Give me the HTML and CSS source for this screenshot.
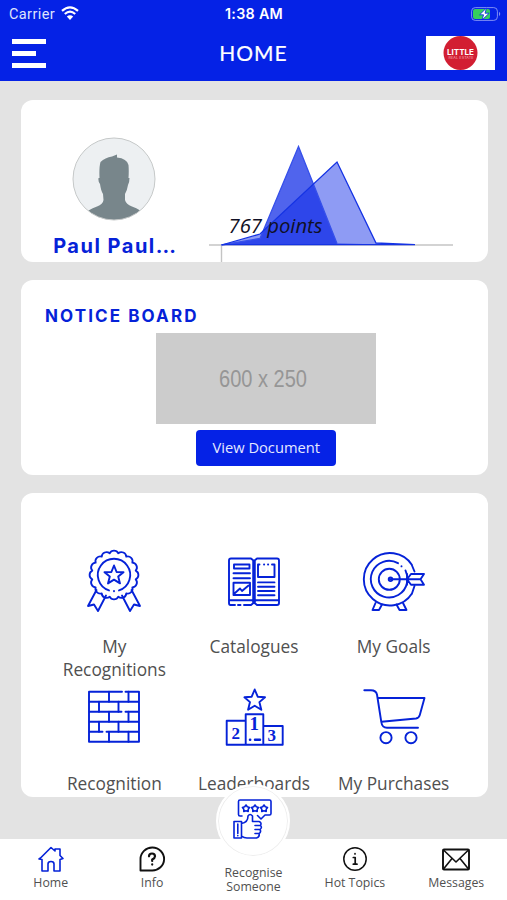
FILE: index.html
```html
<!DOCTYPE html>
<html lang="en">
<head>
    <meta charset="utf-8">
    <meta name="viewport" content="width=device-width, initial-scale=1.0">
    <title>Home</title>
    <link rel="stylesheet" href="styles.css">
</head>
<body>
    <header class="header">
        <div class="status">
            <div class="carrier">
                <span>Carrier</span>
                <svg class="wifi" viewBox="0 0 18 14">
                    <path d="M1 4.8Q9-2.2 17 4.8M3.8 8Q9 3.4 14.2 8" fill="none" stroke="#fff" stroke-width="2.2"/>
                    <path d="M9 14 5.8 10.6Q9 7.8 12.2 10.6Z" fill="#fff"/>
                </svg>
            </div>
            <div class="time">1:38 AM</div>
            <svg class="battery" viewBox="0 0 30 14">
                <rect x=".6" y=".6" width="25.8" height="12.8" rx="3.6" fill="none" stroke="#7f8ef4" stroke-width="1"/>
                <rect x="2" y="2" width="17" height="10" rx="2" fill="#35cf5e"/>
                <path d="M28 4.8Q30.5 7 28 9.2Z" fill="#7f8ef4"/>
                <path d="M15.5 1 8.6 7.8H12.6L11 13 18.2 6.2H14Z" fill="#fff" stroke="#0522e6" stroke-width=".8"/>
            </svg>
        </div>
        <div class="navbar">
            <div class="menu"><i></i><i class="short"></i><i></i></div>
            <h1>HOME</h1>
            <div class="brand">
                <svg viewBox="0 0 69 34">
                    <circle cx="34.5" cy="17" r="17" fill="#d21e32"/>
                    <text x="21" y="18.6" class="brand-name" textLength="27" lengthAdjust="spacingAndGlyphs">LITTLE</text>
                    <text x="22.5" y="23.2" class="brand-sub" textLength="25">REAL ESTATE</text>
                </svg>
            </div>
        </div>
    </header>

    <main class="content">
        <section class="card profile">
            <div class="user">
                <svg class="avatar" viewBox="0 0 84 84">
                    <defs><clipPath id="face"><circle cx="42" cy="42" r="41"/></clipPath></defs>
                    <circle cx="42" cy="42" r="41" fill="#edf0f2"/>
                    <path clip-path="url(#face)" fill="#78868b" d="M10 78Q16 73 25 69.500Q31 67 31.500 63L31 57Q29 54 28 47Q26 45 26.500 41H27.500Q27 30 28.500 25Q33 20.500 40 19.500L45 17.500 45 20.500Q55 21.500 56.500 28Q57 34 56.500 41H57.500Q57.500 45 56 48Q55 54 53 57V63Q54 67 60 69.500Q69 73 74 78V84H10Z"/>
                    <circle cx="42" cy="42" r="41" fill="none" stroke="#c5c8c8"/>
                </svg>
                <div class="user-name">Paul Paul<span>...</span></div>
            </div>
            <svg class="chart" viewBox="0 0 278 162">
                <path d="M0 145H244" stroke="#c4c4c4" stroke-width="1.400"/>
                <path d="M12.500 145V162" stroke="#c4c4c4" stroke-width="1.400"/>
                <path d="M12.500 145 51 134 128 62 167 143 206 145Z" fill="#0522e6" fill-opacity=".45"/>
                <path d="M12.500 145 51 138.500 89.500 46.500 128 143.500 206 145Z" fill="#0522e6" fill-opacity=".7"/>
                <path d="M12.500 145 51 138.500 89.500 46.500 128 143.500" class="line light"/>
                <path d="M12.500 145 51 134 128 62 167 143 206 144.600H12.500" class="line"/>
                <text x="19.500" y="133" textLength="94" lengthAdjust="spacingAndGlyphs">767 points</text>
            </svg>
        </section>

        <section class="card notice">
            <h2>NOTICE BOARD</h2>
            <svg class="picture" viewBox="0 0 220 91">
                <rect width="220" height="91" fill="#ccc"/>
                <text x="63" y="54" textLength="88" lengthAdjust="spacingAndGlyphs">600 x 250</text>
            </svg>
            <button class="btn">View Document</button>
        </section>

        <section class="card grid">
            <div class="item">
                <svg viewBox="0 0 64 64">
                    <g transform="translate(32 26)">
                        <path d="M22.600-4.500A5 5 0 0 1 22.600 4.500 5 5 0 0 1 19.100 12.800 5 5 0 0 1 12.800 19.100 5 5 0 0 1 4.500 22.600 5 5 0 0 1-4.500 22.600 5 5 0 0 1-12.800 19.100 5 5 0 0 1-19.100 12.800 5 5 0 0 1-22.600 4.500 5 5 0 0 1-22.600-4.500 5 5 0 0 1-19.100-12.800 5 5 0 0 1-12.800-19.100 5 5 0 0 1-4.500-22.600 5 5 0 0 1 4.500-22.600 5 5 0 0 1 12.800-19.100 5 5 0 0 1 19.100-12.800 5 5 0 0 1 22.600-4.500Z" transform="scale(.96)"/>
                        <path d="M-5 15.400A16.200 16.200 0 1 1 5 15.400M0 16V16.200"/>
                        <path d="M0-9.500 2.600-3 9.500-2.800 4.200 1.600 6 8.400 0 4.600-6 8.400-4.200 1.600-9.500-2.800-2.600-3Z"/>
                    </g>
                    <path d="M14.500 41 6 57 12 55.500 16 62 24 46.500M49.500 41 58 57 52 55.500 48 62 40 46.500"/>
                </svg>
                <span>My Recognitions</span>
            </div>
            <div class="item">
                <svg viewBox="0 0 64 64">
                    <path d="M13 56H8.500Q7 56 7 54V11.500Q7 9.500 9 9.500H29L32 12 35 9.500H55Q57 9.500 57 11.500V54Q57 56 55 56H35L32 53.500 29 56H22M16 56H18.500M31.200 12V54M32.800 12V54M7 51.300H30L32 53 34 51.300H57"/>
                    <path d="M12 15.500H27.500V19.500H12ZM11.500 24.300H28M11.500 29.300H28M11.500 33.700H28V46H11.500ZM13 44 18 39.500 20 42 26.500 36.500"/>
                    <path d="M37.500 15.500H36V28H52.500V15.500H50M42 15.500H42.200M46 15.500H46.200M36 33.400H52.500M36 37.700H52.500M36 42H52.500M36 46.300H52.500"/>
                </svg>
                <span>Catalogues</span>
            </div>
            <div class="item">
                <svg viewBox="0 0 64 64">
                    <path d="M50 16A26.200 26.200 0 1 0 50 44.500M36 14.200A18.300 18.300 0 1 0 45 34M43.500 21.500 45 26M39.500 17.200V17.400M49.800 16 52.500 22.500M49.800 45 52.500 37"/>
                    <circle cx="27.300" cy="30.300" r="10.500"/>
                    <circle cx="28.500" cy="30.300" r="1.800"/>
                    <path d="M28 30.300H58M45 30.300 49 25H62L58.500 30.300 62 35.700H49ZM45 25V35.700M13.500 54 10.500 61H17L20 55.500M41 54 44.500 61H37.500L34.500 55.500"/>
                </svg>
                <span>My Goals</span>
            </div>
            <div class="item">
                <svg viewBox="0 0 64 64">
                    <path d="M40 5.700H7V55.700H57V5.700H43.500M7 15.700H57M7 25.700H39.500M43.500 25.700H57M7 35.700H57M7 45.700H20.500M24.500 45.700H57"/>
                    <path d="M27 5.700V15.700M46.500 5.700V15.700M17 15.700V25.700M36.500 15.700V25.700M27 25.700V35.700M46.500 25.700V35.700M17 35.700V45.700M36.500 35.700V45.700M27 45.700V55.700M46.500 45.700V55.700"/>
                </svg>
                <span>Recognition</span>
            </div>
            <div class="item">
                <svg viewBox="0 0 64 64">
                    <path d="M32.700 3.500 35.700 10.700 43 11.300 37.400 16.100 39.300 23.800 32.700 19.700 26.100 23.800 28 16.100 22.400 11.300 29.700 10.700Z"/>
                    <path d="M23.700 58.700H4.700V34.700H23.700M41.300 40H60.700V58.700H41.300M23.700 28.300H41.300V58.700H23.700Z"/>
                    <path d="M28 53.800H28.200M33 53.800H38" stroke-width="2.500"/>
                    <text x="9.500" y="53">2</text>
                    <text x="27.500" y="43.500" class="first">1</text>
                    <text x="45.500" y="55">3</text>
                </svg>
                <span>Leaderboards</span>
            </div>
            <div class="item">
                <svg viewBox="0 0 64 64">
                    <path d="M2.300 4.200H9Q14 4.200 15 8.500L19.300 36Q20 41.700 25 41.700H56M15.700 12H62.500L57.800 29Q57 32 54 32.500L19.500 35.700"/>
                    <circle cx="24" cy="51.700" r="5.600"/>
                    <circle cx="49" cy="51.700" r="5.600"/>
                </svg>
                <span>My Purchases</span>
            </div>
        </section>
    </main>

    <nav class="tabs">
        <a class="tab">
            <svg class="blue" viewBox="0 0 28 28">
                <path d="M3.500 13 14 2.500 18 6V4H23V10.500L26 13.500 23 14.500V26H17V19Q17 16.500 14 16.500T11 19V26H5V14.500L2 14Z"/>
            </svg>
            <span>Home</span>
        </a>
        <a class="tab">
            <svg viewBox="0 0 28 28">
                <path d="M2.500 25.500V14A11.800 11.500 0 1 1 14 25.500Z"/>
                <path d="M11 11.300Q11 8.500 14 8.500T17 11.200Q17 13 14.200 14.500V16M14.200 19.300V19.600" stroke-width="2.200"/>
            </svg>
            <span>Info</span>
        </a>
        <a class="tab middle">
            <div class="bubble">
                <svg class="blue" viewBox="0 0 40 40">
                    <path d="M9 16H7Q5.500 16 5.500 14.500V1.500Q5.500 0 7 0H36.500Q38 0 38 1.500V13.500Q38 15 36.500 15H32L28 19 24.500 15.500"/>
                    <path d="M13 5 14.300 6.800 16.500 7.500 15.200 9.300 15.200 11.500 13 10.800 10.800 11.500 10.800 9.300 9.500 7.500 11.700 6.800ZM22 5 23.300 6.800 25.500 7.500 24.200 9.300 24.200 11.500 22 10.800 19.800 11.500 19.800 9.300 18.500 7.500 20.700 6.800ZM31 5 32.300 6.800 34.500 7.500 33.200 9.300 33.200 11.500 31 10.800 28.800 11.500 28.800 9.300 27.500 7.500 29.700 6.800Z"/>
                    <path d="M1 21.500H8.500V38H1ZM4.800 24V33.500M4.800 35.500V35.700M8.500 23.500Q15 22.500 15 16 17 13 19.500 16V21.500H26Q29 22.500 27.500 25.500 29.500 27.500 27 29.500 28.500 32 26 33.500 27 37 23.500 38H14Q11 38 8.500 36M22 25.500H27.500M22 29.500H27M22 33.500H26"/>
                </svg>
            </div>
            <span>Recognise Someone</span>
        </a>
        <a class="tab">
            <svg viewBox="0 0 28 28">
                <circle cx="14" cy="14" r="11.200" stroke-width="1.500"/>
                <path d="M12.300 12.500H14.200V19M12.300 19.200H16M14 8.700V8.900" stroke-width="1.700"/>
            </svg>
            <span>Hot Topics</span>
        </a>
        <a class="tab">
            <svg class="wide" viewBox="0 0 30 28">
                <rect x="2" y="4.500" width="26" height="20" rx="1"/>
                <path d="M2.500 5 15 17 27.500 5M2.500 24 11 13.500M27.500 24 19 13.500" stroke-width="1.600"/>
            </svg>
            <span>Messages</span>
        </a>
    </nav>
</body>
</html>
```
FILE: styles.css
```css
* {box-sizing: border-box;}
body {margin: 0;height: 900px;display: flex;flex-direction: column;overflow: hidden;background: #e3e3e3;color: #505050;font-family: "Open Sans", "Noto Sans", sans-serif;}
h1, h2 {margin: 0;}
svg {display: block;flex: none;}

/* header */
.header {height: 81px;flex: none;background: #0522e6;color: #fff;}
.status {height: 28px;padding: 0 6px 0 9px;display: grid;grid-template-columns: 1fr auto 1fr;align-items: center;}
.carrier {display: flex;align-items: center;gap: 6px;color: #dfe3fc;font-family: Roboto, sans-serif;font-size: 14.5px;letter-spacing: .4px;}
.wifi {width: 18px;height: 14px;margin-top: -2px;}
.time {margin-right: 2px;font: 600 14.3px/26px Inter, sans-serif;letter-spacing: .3px;}
.battery {width: 30px;height: 14px;justify-self: end;margin-top: -1px;}
.navbar {height: 50px;padding: 0 12px;display: grid;grid-template-columns: 1fr auto 1fr;align-items: center;}
.menu {width: 34px;display: flex;flex-direction: column;gap: 7px;}
.menu i {height: 5px;background: #fff;}
.menu .short {width: 24px;}
.navbar h1 {padding-bottom: 2px;font-family: Lato, sans-serif;font-size: 21px;font-weight: 400;letter-spacing: 1px;-webkit-text-stroke: .2px #fff;}
.brand {width: 69px;height: 34px;background: #fff;justify-self: end;}
.brand-name {font: bold 8px Inter, sans-serif;fill: #fff;}
.brand-sub {font: 3.8px Inter, sans-serif;fill: #f3a9b2;}

/* cards */
.content {flex: 1;min-height: 0;padding: 19px 19.5px 0 20.5px;display: flex;flex-direction: column;gap: 18px;}
.card {background: #fff;border-radius: 12px;overflow: hidden;flex: none;}
.profile {height: 162px;display: flex;}
.user {width: 188px;padding-top: 37px;display: flex;flex-direction: column;align-items: center;}
.avatar {width: 84px;height: 84px;margin-right: 1px;}
.user-name {margin-top: 10px;color: #0522d8;font: bold 20px/30px Inter, sans-serif;letter-spacing: 1.5px;}
.user-name span {letter-spacing: 0;}
.chart {width: 278px;height: 162px;}
.chart .line {fill: none;stroke: #1533e4;stroke-width: 1.3;}
.chart .light {stroke: #3650ea;}
.chart text {font: italic 20px "Open Sans", sans-serif;fill: #101025;}
.notice {height: 195px;padding: 24px 0 0 24.5px;display: flex;flex-direction: column;align-items: center;}
.notice h2 {align-self: flex-start;color: #0522d8;font: bold 17px/24px Inter, sans-serif;letter-spacing: 2.1px;}
.picture {width: 220px;height: 91px;margin: 5px 0 6px;}
.picture text {font: 24px "Liberation Sans", sans-serif;fill: #969696;}
.btn {width: 140px;height: 36px;padding: 0 0 2px;border: 0;border-radius: 4px;background: #0522e6;color: #e4e8ff;font: 14.7px "Open Sans", sans-serif;}

/* menu items */
.grid {height: 304px;padding: 56px 24px 0;display: grid;grid-template-columns: repeat(3, 1fr);grid-auto-rows: 137px;}
.item {padding: 0 11px;display: flex;flex-direction: column;align-items: center;text-align: center;font-size: 17.3px;line-height: 23px;}
.item svg {width: 64px;height: 64px;margin-bottom: 22px;fill: none;stroke: #0522d8;stroke-width: 1.9;stroke-linecap: round;stroke-linejoin: round;}
.item text {font: bold 17px "Liberation Serif", serif;fill: #0522d8;stroke: none;}
.item .first {font-size: 19px;}

/* bottom bar */
.tabs {height: 61px;flex: none;display: flex;background: #fff;}
.tab {width: 20%;padding-top: 6px;display: flex;flex-direction: column;align-items: center;text-align: center;font-size: 12.3px;line-height: 20px;}
.tab svg {width: 28px;height: 28px;fill: none;stroke: #111;stroke-width: 1.9;stroke-linecap: round;stroke-linejoin: round;}
.tab .wide {width: 30px;}
.tab .blue {stroke: #0522d8;stroke-width: 1.6;}
.middle {padding: 0 15px;line-height: 14px;}
.bubble {width: 74px;height: 74px;flex: none;margin: -55px 0 8px;display: flex;align-items: center;justify-content: center;background: #fff;border: 2px solid #fff;border-radius: 50%;box-shadow: inset 0 0 0 1px #eee;z-index: 1;}
.bubble .blue {width: 40px;height: 40px;margin-top: -2px;overflow: visible;}
```
